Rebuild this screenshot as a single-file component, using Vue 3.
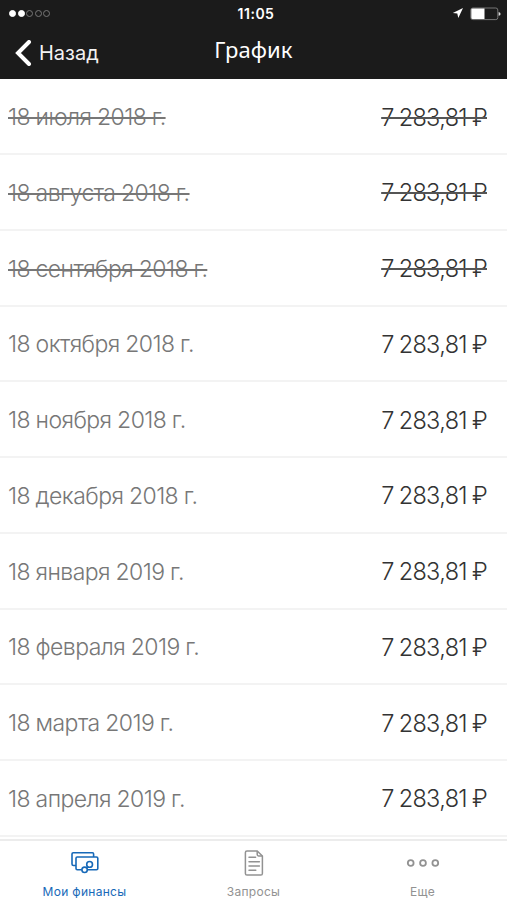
<template>
  <div class="phone">
    <header class="header">
      <div class="status">
        <div class="signal">
          <span v-for="n in 5" :key="n" class="dot" :class="{ full: n <= 2 }"></span>
        </div>
        <div class="time">11:05</div>
        <div class="status-right">
          <svg class="location" width="12" height="12" viewBox="0 0 12 12">
            <path d="M11 1L6.3 11L5.3 6.4L.8 6Z" fill="#fff" />
          </svg>
          <svg width="31" height="14" viewBox="0 0 31 14">
            <rect x=".8" y="1" width="27" height="11.6" rx="2" fill="none" stroke="#777" />
            <path d="M2.5 1.5H14.5V12H2.5Q1.3 12 1.3 10.8V2.7Q1.3 1.5 2.5 1.5Z" fill="#fff" />
            <path d="M28.6 5Q30.6 5.5 30.6 6.9T28.6 8.8Z" fill="#ddd" />
          </svg>
        </div>
      </div>
      <div class="navbar">
        <button class="back">
          <svg width="17" height="26" viewBox="0 0 17 26">
            <path d="M14 2L3 13L14 24" fill="none" stroke="#fff" stroke-width="4" stroke-linecap="round" stroke-linejoin="miter" />
          </svg>
          <span>Назад</span>
        </button>
        <h1 class="title">График</h1>
      </div>
    </header>

    <ul class="list">
      <li v-for="p in payments" :key="p.date" class="row" :class="{ paid: p.paid }">
        <span class="date">{{ p.date }}</span>
        <span class="sum">7 283,81 ₽</span>
      </li>
    </ul>

    <nav class="tabs">
      <a class="tab active">
        <svg width="28" height="24" viewBox="0 0 28 24" fill="none" stroke="currentColor" stroke-width="1.6">
          <path d="M5 14.5H2.5Q1 14.5 1 13V3Q1 1.8 2.2 1.8H21.5Q22.6 1.8 22.6 3V6" />
          <path d="M10.8 18.8H6.2Q5 18.8 5 17.6V7.2Q5 6 6.2 6H25.5Q26.8 6 26.8 7.2V17.6Q26.8 18.8 25.5 18.8H16.6" />
          <circle cx="18.6" cy="13.4" r="2.9" />
          <circle cx="13.6" cy="18.8" r="2.7" />
          <path d="M15.6 17L16.5 15.8" />
        </svg>
        <span>Мои финансы</span>
      </a>
      <a class="tab">
        <svg width="20" height="26" viewBox="0 0 20 26" fill="none" stroke="currentColor" stroke-width="1.5">
          <path d="M3 1H13.2L18.4 6V23.4Q18.4 25 16.8 25H3Q1.4 25 1.4 23.4V2.6Q1.4 1 3 1Z" />
          <path d="M13.2 1V4.6Q13.2 6 14.6 6H18.4" />
          <path d="M5 7.3H11.6M5 11.7H15.4M5 16H15.4M5 20.3H11.8" stroke-linecap="round" />
        </svg>
        <span>Запросы</span>
      </a>
      <a class="tab">
        <svg width="34" height="10" viewBox="0 0 34 10" fill="none" stroke="currentColor" stroke-width="1.8">
          <circle cx="4.7" cy="5" r="2.9" />
          <circle cx="17" cy="5" r="2.9" />
          <circle cx="29.3" cy="5" r="2.9" />
        </svg>
        <span>Еще</span>
      </a>
    </nav>
  </div>
</template>

<script setup>
const payments = [
  { date: '18 июля 2018 г.', paid: true },
  { date: '18 августа 2018 г.', paid: true },
  { date: '18 сентября 2018 г.', paid: true },
  { date: '18 октября 2018 г.' },
  { date: '18 ноября 2018 г.' },
  { date: '18 декабря 2018 г.' },
  { date: '18 января 2019 г.' },
  { date: '18 февраля 2019 г.' },
  { date: '18 марта 2019 г.' },
  { date: '18 апреля 2019 г.' },
];
</script>

<style>
body {
  margin: 0;
  background: #fff;
}
</style>

<style scoped>
.phone {
  display: flex;
  flex-direction: column;
  width: 507px;
  height: 900px;
  overflow: hidden;
  background: #fff;
  font-family: Inter, 'Liberation Sans', sans-serif;
}

/* шапка */
.header {
  box-sizing: border-box;
  flex: none;
  height: 79.3px;
  background: #1b1b1b;
  color: #fff;
}

.status {
  display: grid;
  grid-template-columns: 1fr auto 1fr;
  align-items: center;
  height: 27px;
  padding: 0 6px 0 9px;
}

.signal {
  display: flex;
  gap: 1.6px;
}

.dot {
  box-sizing: border-box;
  width: 7px;
  height: 7px;
  border: 1px solid #777;
  border-radius: 50%;
}

.dot.full {
  background: #fff;
  border-color: #fff;
}

.time {
  padding-left: 2px;
  font-size: 14px;
  font-weight: 600;
  letter-spacing: 0.5px;
}

.status-right {
  display: flex;
  justify-content: flex-end;
  align-items: center;
  gap: 6px;
}

.location {
  margin-top: -1px;
}

.navbar {
  display: grid;
  grid-template-columns: 1fr auto 1fr;
  align-items: center;
  height: 51px;
}

.back {
  display: flex;
  align-items: center;
  gap: 7px;
  padding: 0 0 0 15px;
  border: none;
  background: none;
  color: #f2f2f2;
  font-family: inherit;
  font-size: 20px;
}

.title {
  margin: 0 0 7px;
  font-family: 'Noto Sans', sans-serif;
  font-size: 22px;
  font-weight: 400;
  letter-spacing: 0.1px;
}

/* список платежей */
.list {
  flex: none;
  margin: 0;
  padding: 0;
  list-style: none;
}

.row {
  box-sizing: border-box;
  display: flex;
  justify-content: space-between;
  align-items: center;
  height: 75.75px;
  padding: 2px 20px 0 8px;
  border-bottom: 2px solid #f3f3f3;
  font-size: 23px;
  font-weight: 300;
  white-space: nowrap;
}

.date {
  color: #777;
  letter-spacing: -0.57px;
  word-spacing: -0.3px;
}

.sum {
  color: #333;
  font-size: 23.5px;
  letter-spacing: -0.65px;
  word-spacing: -1px;
}

.paid .date,
.paid .sum {
  text-decoration: line-through;
  text-decoration-thickness: 1.5px;
}

.paid .sum {
  text-decoration-color: #555;
}

/* нижняя панель */
.tabs {
  display: grid;
  grid-template-columns: repeat(3, 1fr);
  flex: 1;
  margin-top: 2.2px;
  border-top: 2px solid #ececec;
}

.tab {
  display: grid;
  grid-template-rows: 45px 12px;
  align-items: center;
  justify-items: center;
  color: #929292;
  font-size: 12px;
  letter-spacing: 0.3px;
}

.tab.active {
  color: #1769b8;
}
</style>
